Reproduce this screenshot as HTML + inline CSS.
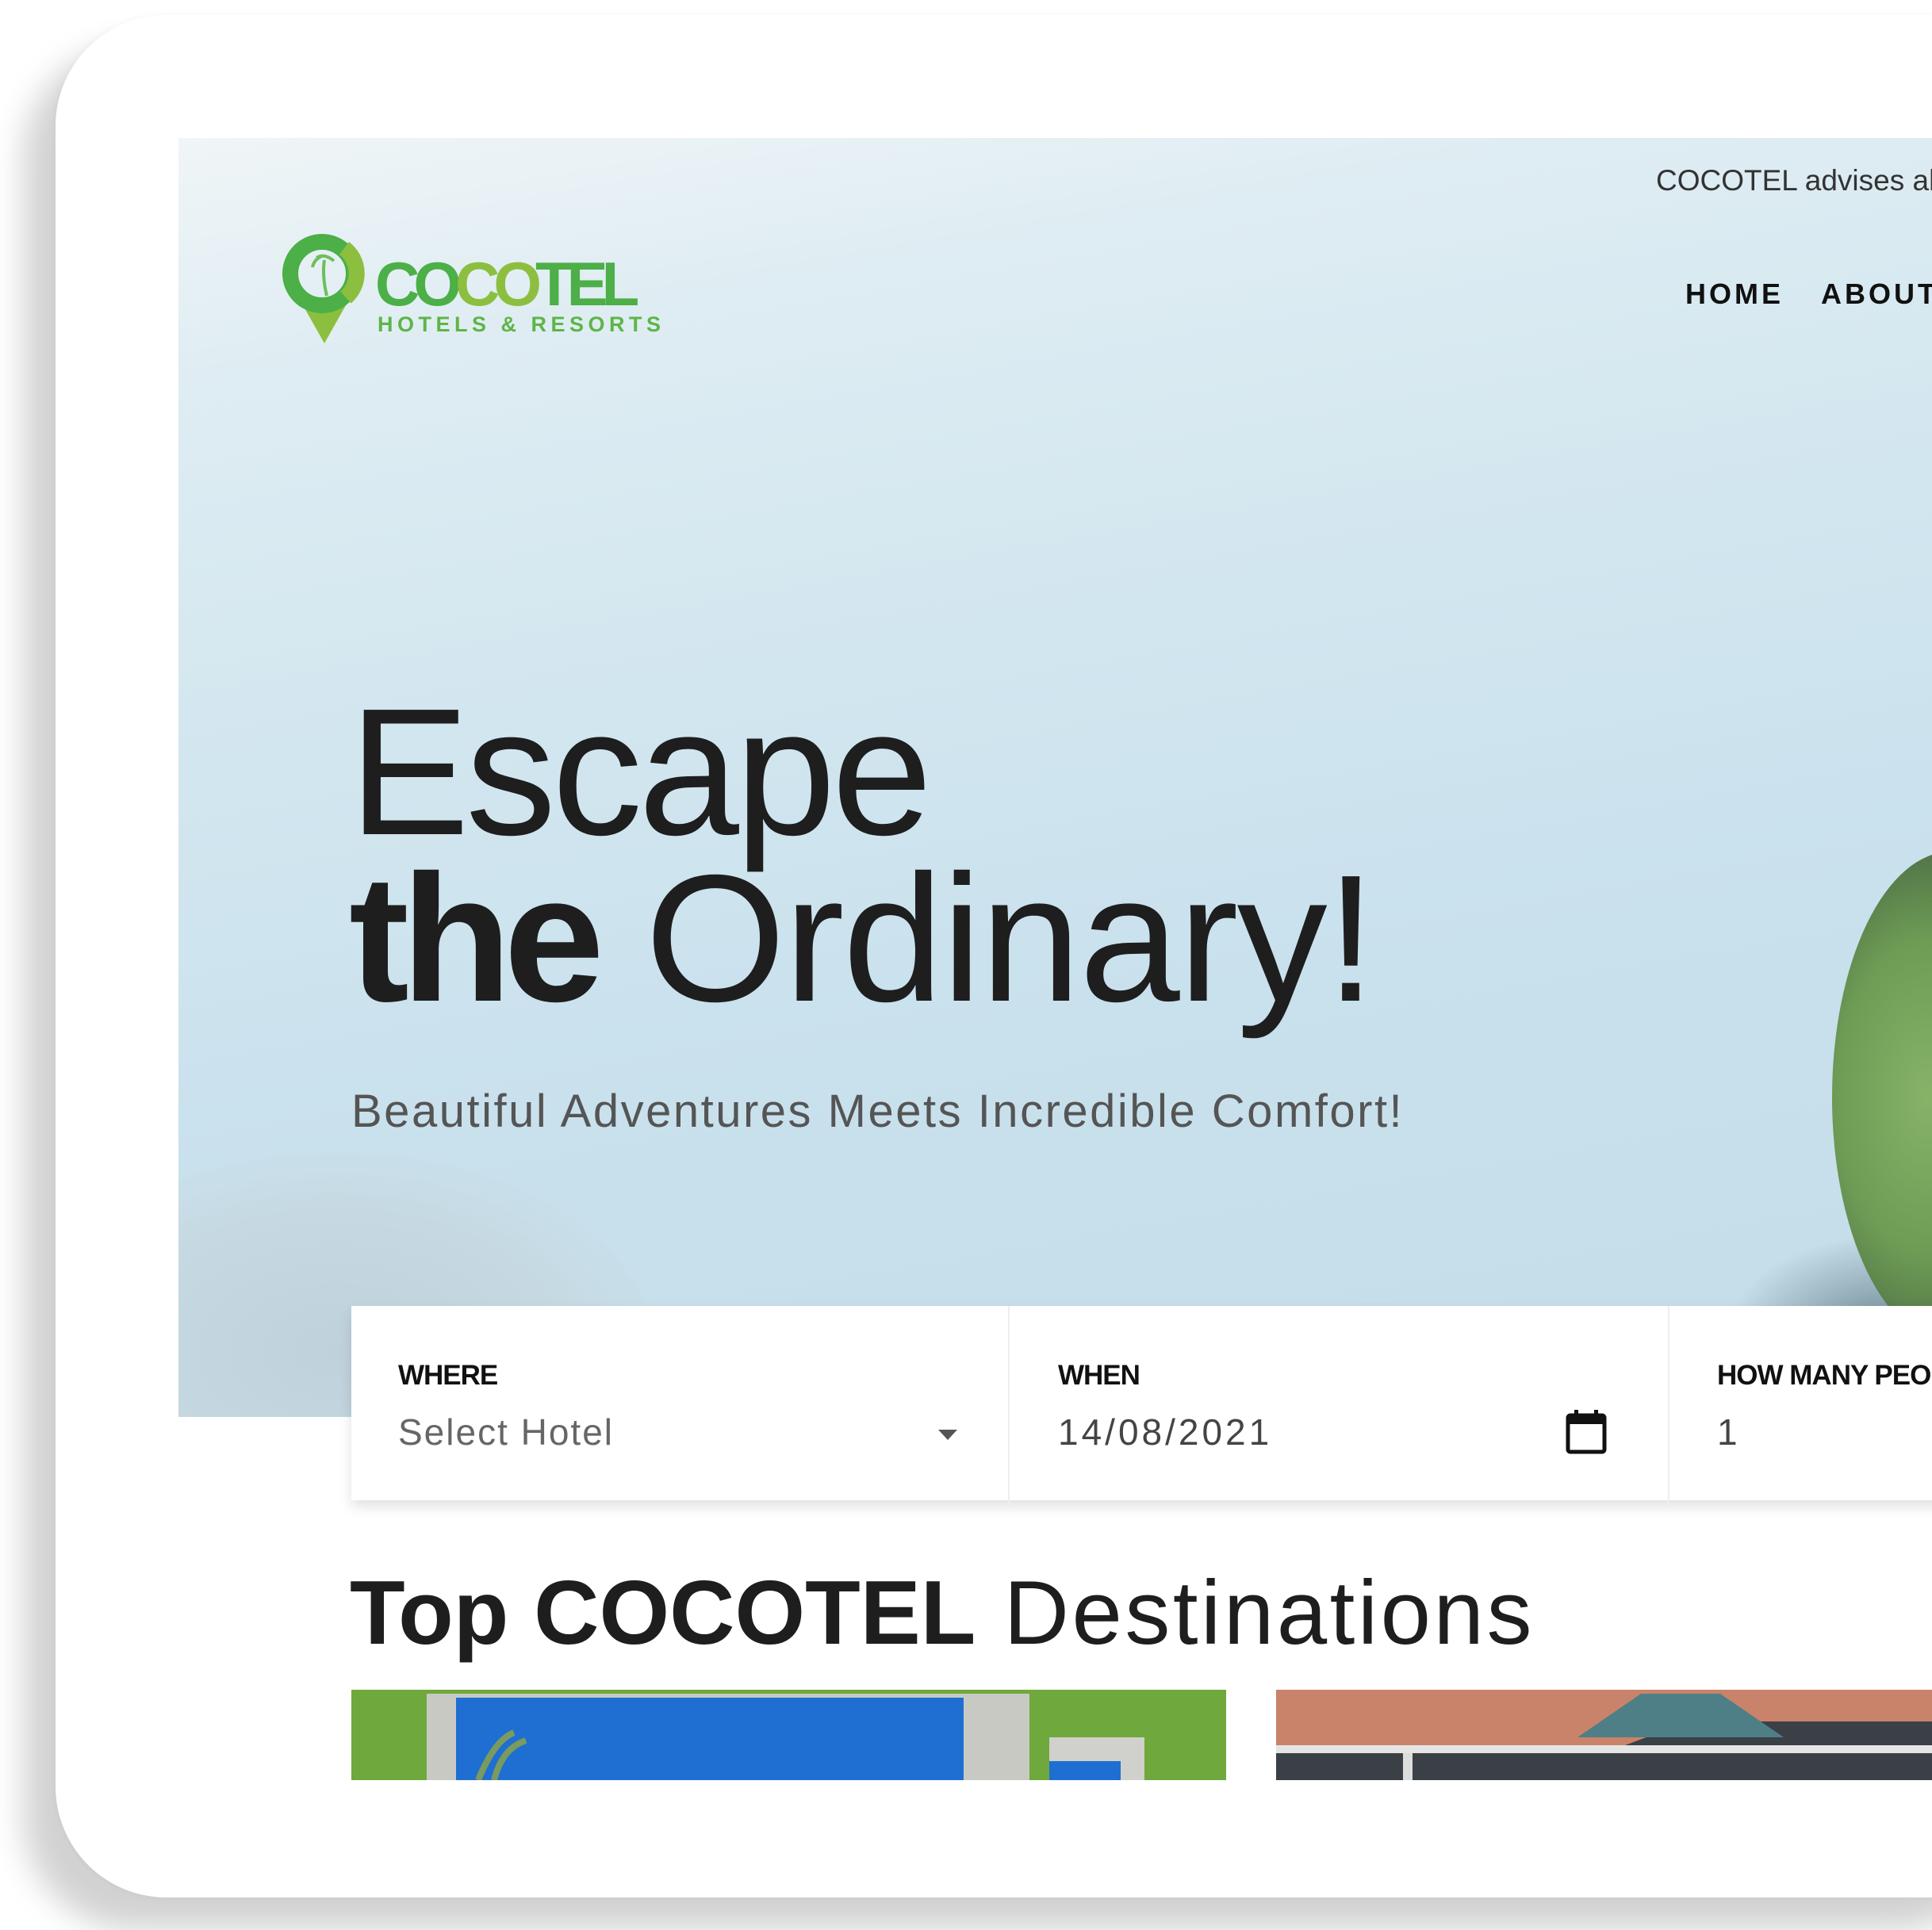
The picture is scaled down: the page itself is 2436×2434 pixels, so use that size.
<!DOCTYPE html>
<html><head><meta charset="utf-8"><style>
html,body{margin:0;padding:0;width:2436px;height:2434px;overflow:hidden;background:#fff;font-family:"Liberation Sans",sans-serif}
.card{position:absolute;left:70px;top:19px;width:2500px;height:2374px;background:#fff;border-radius:140px;box-shadow:-40px 40px 40px rgba(0,0,0,0.18),0 0 10px rgba(0,0,0,0.04)}
.hero{position:absolute;left:225px;top:174px;width:2211px;height:1613px;overflow:hidden;
background:linear-gradient(170deg,#f0f5f7 0%,#dfedf3 15%,#d2e6ef 40%,#c9e1ed 65%,#c5dde8 100%)}
.sand{position:absolute;left:-200px;top:1280px;width:800px;height:500px;border-radius:50%;background:radial-gradient(ellipse,#bfd2db 0%,#c6d9e2 50%,rgba(200,222,232,0) 75%)}
.coco{position:absolute;left:2085px;top:900px;width:300px;height:620px;border-radius:50%;background:radial-gradient(ellipse at 40% 50%,#86b368 0%,#6e9c55 45%,#4d6e46 75%,#3b4c44 100%)}
.coco2{position:absolute;left:1950px;top:1380px;width:420px;height:260px;border-radius:50%;background:radial-gradient(ellipse,#6b8691 0%,rgba(120,150,160,0) 70%)}
.t{position:absolute;white-space:nowrap;color:#222}
.box{position:absolute;left:443px;top:1647px;width:2100px;height:245px;background:#fff;box-shadow:0 8px 16px rgba(0,0,0,0.12)}
.div{position:absolute;top:0;width:2px;height:255px;background:#eee}
.lbl{position:absolute;font-weight:bold;font-size:35px;color:#111;top:68px;letter-spacing:-1px}
.val{position:absolute;font-size:46px;color:#666;top:132px;letter-spacing:2px}
</style></head><body>
<div class="card"></div>
<div class="hero">
  <div class="sand"></div>
  <div class="coco2"></div>
  <div class="coco"></div>
</div>
<svg style="position:absolute;left:354px;top:293px" width="110" height="142" viewBox="0 0 110 142">
  <polygon points="28,92 82,92 55,140" fill="#8cbf3f"/>
  <circle cx="52" cy="52" r="40" fill="none" stroke="#4caf47" stroke-width="20"/>
  <path d="M80 20 A40 40 0 0 1 82 82" fill="none" stroke="#8cbf3f" stroke-width="20"/>
  <path d="M55 35 q-3 20 3 45 M45 32 q10 -6 22 4 M52 30 q-10 4 -12 14" stroke="#6cbf5b" stroke-width="4" fill="none"/>
</svg>
<div class="t" style="left:473px;top:313px;font-size:78px;font-weight:bold;letter-spacing:-8px;color:#4caf47">CO<span style="color:#8cbf3f">CO</span>TEL</div>
<div class="t" style="left:476px;top:394px;font-size:27px;font-weight:bold;letter-spacing:5.5px;color:#5fb547">HOTELS &amp; RESORTS</div>
<div class="t" style="left:2088px;top:207px;font-size:37px;color:#333">COCOTEL advises all</div>
<div class="t" style="left:2125px;top:350px;font-size:36px;font-weight:bold;letter-spacing:4px;color:#111">HOME</div>
<div class="t" style="left:2296px;top:350px;font-size:36px;font-weight:bold;letter-spacing:4px;color:#111">ABOUT</div>
<div class="t" style="left:440px;top:860px;font-size:228px;letter-spacing:-5px;color:#1e1e1e;line-height:1">Escape</div>
<div class="t" style="left:440px;top:1070px;font-size:228px;letter-spacing:-2px;color:#1e1e1e;line-height:1"><b style="letter-spacing:-10px">the</b> Ordinary!</div>
<div class="t" style="left:443px;top:1368px;font-size:58px;letter-spacing:2.5px;color:#555">Beautiful Adventures Meets Incredible Comfort!</div>
<div class="box">
  <div class="div" style="left:828px"></div>
  <div class="div" style="left:1660px"></div>
  <div class="lbl" style="left:59px">WHERE</div>
  <div class="val" style="left:59px">Select Hotel</div>
  <div style="position:absolute;left:740px;top:156px;width:0;height:0;border-left:12px solid transparent;border-right:12px solid transparent;border-top:13px solid #555"></div>
  <div class="lbl" style="left:891px">WHEN</div>
  <div class="val" style="left:891px;color:#444;letter-spacing:4px">14/08/2021</div>
  <svg style="position:absolute;left:1530px;top:130px" width="54" height="58" viewBox="0 0 54 58"><rect x="4" y="8" width="46" height="46" rx="3" fill="none" stroke="#111" stroke-width="5"/><rect x="4" y="8" width="46" height="11" fill="#111"/><rect x="12" y="1" width="5" height="10" fill="#111"/><rect x="37" y="1" width="5" height="10" fill="#111"/></svg>
  <div class="lbl" style="left:1722px">HOW MANY PEOPLE</div>
  <div class="val" style="left:1722px;color:#444">1</div>
</div>
<div class="t" style="left:441px;top:1972px;font-size:114px;color:#1e1e1e;line-height:1.1;letter-spacing:3.5px"><b style="letter-spacing:0px">Top COCOTEL</b> Destinations</div>
<svg style="position:absolute;left:443px;top:2131px" width="1103" height="114" viewBox="0 0 1103 114">
  <rect width="1103" height="114" fill="#6fa83c"/>
  <rect x="95" y="5" width="760" height="109" fill="#c9c9c4"/>
  <rect x="132" y="10" width="640" height="104" fill="#1e6fd1"/>
  <rect x="880" y="60" width="120" height="54" fill="#d0d0cc"/>
  <rect x="880" y="90" width="90" height="24" fill="#1e6fd1"/>
  <path d="M160 114 q20-50 45-60 M180 114 q10-40 40-50" stroke="#7a9a60" stroke-width="8" fill="none"/>
</svg>
<svg style="position:absolute;left:1609px;top:2131px" width="827" height="114" viewBox="0 0 827 114">
  <rect width="827" height="114" fill="#3a4046"/>
  <polygon points="0,0 827,0 827,40 520,40 440,70 0,70" fill="#c9836a"/>
  <polygon points="380,60 460,5 560,5 640,60" fill="#4f7f86"/>
  <rect x="0" y="70" width="827" height="10" fill="#e5e5e5"/>
  <rect x="160" y="80" width="12" height="34" fill="#ddd"/>
</svg>
</body></html>
